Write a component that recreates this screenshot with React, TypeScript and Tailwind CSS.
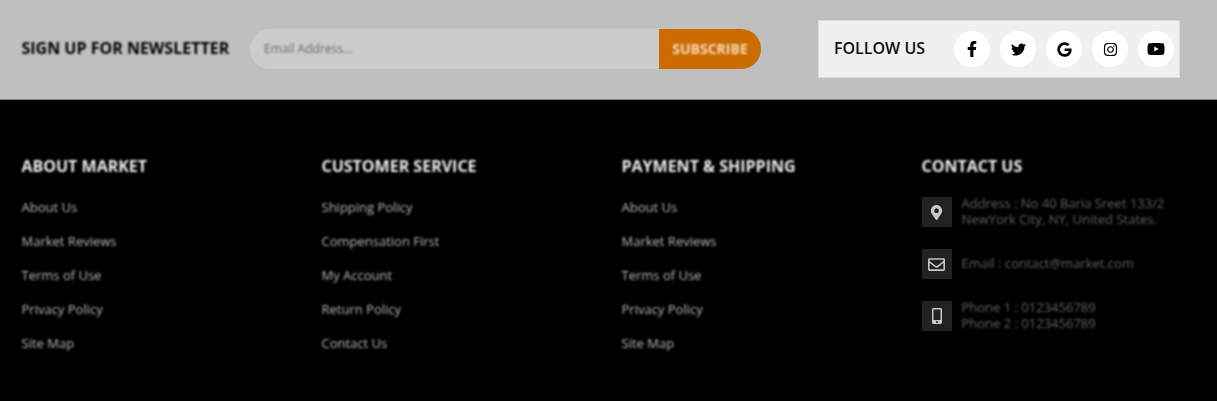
import React from "react";
import {
  FaFacebookF,
  FaTwitter,
  FaGoogle,
  FaInstagram,
  FaYoutube,
  FaMapMarkerAlt,
  FaRegEnvelope,
  FaMobileAlt,
} from "react-icons/fa";

const columns = [
  {
    title: "ABOUT MARKET",
    links: ["About Us", "Market Reviews", "Terms of Use", "Privacy Policy", "Site Map"],
  },
  {
    title: "CUSTOMER SERVICE",
    links: ["Shipping Policy", "Compensation First", "My Account", "Return Policy", "Contact Us"],
  },
  {
    title: "PAYMENT & SHIPPING",
    links: ["About Us", "Market Reviews", "Terms of Use", "Privacy Policy", "Site Map"],
  },
];

const socials = [
  { name: "facebook", icon: <FaFacebookF size={16} /> },
  { name: "twitter", icon: <FaTwitter size={15} /> },
  { name: "google", icon: <FaGoogle size={15} /> },
  { name: "instagram", icon: <FaInstagram size={15} /> },
  { name: "youtube", icon: <FaYoutube size={18} /> },
];

const contacts = [
  { icon: <FaMapMarkerAlt size={15} />, lines: ["Address : No 40 Baria Sreet 133/2", "NewYork City, NY, United States."] },
  { icon: <FaRegEnvelope size={17} />, lines: ["Email : contact@market.com"] },
  { icon: <FaMobileAlt size={16} />, lines: ["Phone 1 : 0123456789", "Phone 2 : 0123456789"] },
];

const App = () => {
  return (
    <div className="w-[1217px] h-[401px] overflow-hidden bg-black font-['Open_Sans',sans-serif]">
      <div className="h-[100px] bg-[#bfbfbf] border-b border-[#7a7a7a] flex items-center pl-[21.5px]">
        <h3 className="w-[228.5px] -mt-[3px] text-[16px] leading-[22px] font-bold text-black blur-[0.8px] whitespace-nowrap">
          SIGN UP FOR NEWSLETTER
        </h3>
        <div className="w-[511px] h-10 -mt-[1px] flex rounded-full overflow-hidden">
          <div className="flex-1 bg-[#cccccc] flex items-center pl-[14px] text-[12px] text-[#6a6a6a]">
            <span className="blur-[0.8px]">Email Address...</span>
          </div>
          <div className="w-[102px] bg-[#cc6b00] flex items-center justify-center pb-[2px] text-[14px] font-bold text-[#f5dcbc]">
            <span className="blur-[0.8px]">SUBSCRIBE</span>
          </div>
        </div>
        <div className="ml-[57px] -mt-[1px] w-[362px] h-[58px] bg-[#f0f0f0] border border-[#dcdcdc] flex items-center pl-[15px]">
          <span className="w-[120px] -mt-[2px] text-[16px] font-semibold text-[#111111]">FOLLOW US</span>
          <div className="flex gap-[10px]">
            {socials.map((s) => (
              <a key={s.name} aria-label={s.name} className="w-9 h-9 rounded-full bg-white flex items-center justify-center text-black">
                {s.icon}
              </a>
            ))}
          </div>
        </div>
      </div>

      <div className="flex pl-[21.5px] pt-[55px]">
        {columns.map((col) => (
          <div key={col.title} className="w-[300px] blur-[0.8px]">
            <h4 className="text-[16px] leading-[22px] font-bold text-[#ececec] whitespace-nowrap">{col.title}</h4>
            <ul className="mt-[20px] flex flex-col">
              {col.links.map((link) => (
                <li key={link} className="h-[34px] text-[13px] leading-[20px] text-[#b4b4b4]">
                  {link}
                </li>
              ))}
            </ul>
          </div>
        ))}
        <div className="w-[275px]">
          <h4 className="text-[16px] leading-[22px] font-bold text-[#ececec] blur-[0.8px]">CONTACT US</h4>
          <div className="mt-[20px] flex flex-col gap-[22px]">
            {contacts.map((c) => (
              <div key={c.lines[0]} className="flex items-center gap-[10px] h-[30px]">
                <div className="w-[30px] h-[30px] bg-[#222222] flex items-center justify-center text-[#c8c8c8] blur-[0.5px]">
                  {c.icon}
                </div>
                <div className="-mt-[2px] text-[13px] leading-[16px] text-[#606060] blur-[0.8px] whitespace-nowrap">
                  {c.lines.map((l) => (
                    <div key={l}>{l}</div>
                  ))}
                </div>
              </div>
            ))}
          </div>
        </div>
      </div>
    </div>
  );
};

export default App;
